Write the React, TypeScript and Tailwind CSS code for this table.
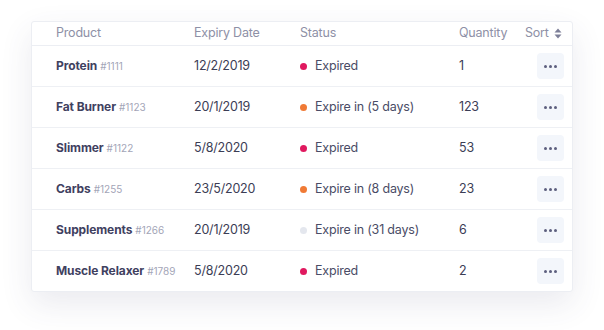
import React from "react";

type Row = {
  name: string;
  id: string;
  date: string;
  status: string;
  dot: string;
  qty: string;
};

const rows: Row[] = [
  { name: "Protein", id: "#1111", date: "12/2/2019", status: "Expired", dot: "bg-[#e0195f]", qty: "1" },
  { name: "Fat Burner", id: "#1123", date: "20/1/2019", status: "Expire in (5 days)", dot: "bg-[#f07a35]", qty: "123" },
  { name: "Slimmer", id: "#1122", date: "5/8/2020", status: "Expired", dot: "bg-[#e0195f]", qty: "53" },
  { name: "Carbs", id: "#1255", date: "23/5/2020", status: "Expire in (8 days)", dot: "bg-[#f07a35]", qty: "23" },
  { name: "Supplements", id: "#1266", date: "20/1/2019", status: "Expire in (31 days)", dot: "bg-[#e4e7ee]", qty: "6" },
  { name: "Muscle Relaxer", id: "#1789", date: "5/8/2020", status: "Expired", dot: "bg-[#e0195f]", qty: "2" },
];

const cols = "grid grid-cols-[138px_106px_159px_66px_1fr] items-center pl-[24px]";

export default function App() {
  return (
    <div
      className="w-[604px] h-[330px] bg-white pt-[21px] pl-[31px]"
      style={{ fontFamily: "Inter, 'Liberation Sans', sans-serif" }}
    >
      <div className="w-[542px] bg-white rounded-[3px] border border-[#eceef3] shadow-[0_12px_32px_rgba(60,64,110,0.11)]">
        {/* Header */}
        <div className={`${cols} h-[24px] border-b border-[#eceef3] text-[12.5px] tracking-[-0.2px] text-[#8e90a6]`}>
          <div>Product</div>
          <div>Expiry Date</div>
          <div>Status</div>
          <div>Quantity</div>
          <div className="flex items-center gap-[5px]">
            Sort
            <svg width="8" height="11" viewBox="0 0 8 11" fill="#7d7f98">
              <path d="M4 0.5 L7.5 4.5 H0.5 Z" />
              <path d="M4 10.5 L7.5 6.5 H0.5 Z" />
            </svg>
          </div>
        </div>

        {rows.map((r, i) => (
          <div
            key={r.name}
            className={`${cols} ${i < rows.length - 1 ? "h-[41px] border-b border-[#eef0f4]" : "h-[40px]"} text-[12.5px] tracking-[-0.2px]`}
          >
            <div className="flex items-baseline gap-[3px] whitespace-nowrap">
              <span className="text-[12px] font-bold tracking-[-0.1px] text-[#3f415f]">{r.name}</span>
              <span className="text-[10px] tracking-normal text-[#a3a5b7]">{r.id}</span>
            </div>
            <div className="text-[#3b3d55]">{r.date}</div>
            <div className="flex items-center gap-[8px] text-[#4a4c66] whitespace-nowrap">
              <span className={`w-[7px] h-[7px] rounded-full ${r.dot}`} />
              {r.status}
            </div>
            <div className="text-[#3b3d55]">{r.qty}</div>
            <div className="flex justify-end pr-[8px]">
              <button className="w-[27px] h-[26px] rounded-[4px] bg-[#f3f6fb] flex items-center justify-center gap-[2px]">
                <span className="w-[3px] h-[3px] rounded-full bg-[#5d5f7e]" />
                <span className="w-[3px] h-[3px] rounded-full bg-[#5d5f7e]" />
                <span className="w-[3px] h-[3px] rounded-full bg-[#5d5f7e]" />
              </button>
            </div>
          </div>
        ))}
      </div>
    </div>
  );
}
